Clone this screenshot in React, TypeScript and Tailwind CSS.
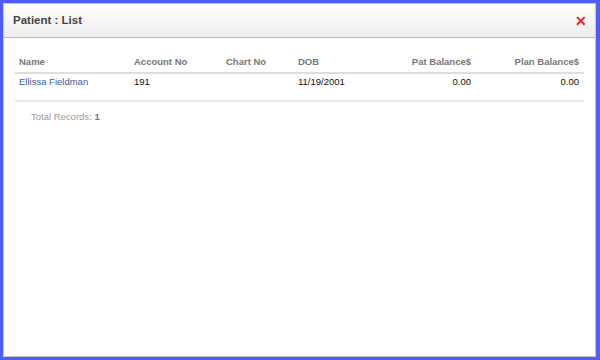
const rows = [
  { name: "Ellissa Fieldman", account: "191", chart: "", dob: "11/19/2001", pat: "0.00", plan: "0.00" },
];

export default function App() {
  return (
    <div
      className="w-[600px] h-[360px] bg-[#4d5dff] pt-[3px] pl-[3px] pr-[4px] pb-[3px]"
      style={{ fontFamily: '"Liberation Sans", Arial, sans-serif' }}
    >
      <div className="flex h-full flex-col border border-[#c8c8c8] bg-white">
        {/* Header */}
        <div className="flex h-[34px] items-center justify-between border-b border-[#bdbdbd] bg-gradient-to-b from-white to-[#ededed] pl-[9px] pr-[8px]">
          <span className="text-[11.5px] font-bold text-[#444]">Patient : List</span>
          <span className="text-[14px] font-bold leading-none text-[#e8232b]">✕</span>
        </div>

        {/* Table */}
        <div className="px-[11px] pt-[14px]">
          <table className="w-full border-collapse text-[9.5px]">
            <thead>
              <tr className="border-b-2 border-[#dedede] text-[#777]">
                <th className="h-[21px] w-[119px] pl-[4px] text-left font-bold">Name</th>
                <th className="w-[92px] text-left font-bold">Account No</th>
                <th className="w-[72px] text-left font-bold">Chart No</th>
                <th className="text-left font-bold">DOB</th>
                <th className="w-[100px] text-right font-bold">Pat Balance$</th>
                <th className="w-[113px] pr-[5px] text-right font-bold">Plan Balance$</th>
              </tr>
            </thead>
            <tbody>
              {rows.map((r) => (
                <tr key={r.name} className="border-b-2 border-[#e8e8e8] text-[#111]">
                  <td className="h-[28px] pl-[4px] pb-[9px] text-[#3d5d9c]">{r.name}</td>
                  <td className="pb-[9px]">{r.account}</td>
                  <td className="pb-[9px]">{r.chart}</td>
                  <td className="pb-[9px]">{r.dob}</td>
                  <td className="pb-[9px] text-right">{r.pat}</td>
                  <td className="pb-[9px] pr-[5px] text-right">{r.plan}</td>
                </tr>
              ))}
            </tbody>
          </table>
          <div className="pl-[16px] pt-[8px] text-[9.5px] text-[#999]">
            Total Records: <span className="font-bold text-[#777]">1</span>
          </div>
        </div>
      </div>
    </div>
  );
}
